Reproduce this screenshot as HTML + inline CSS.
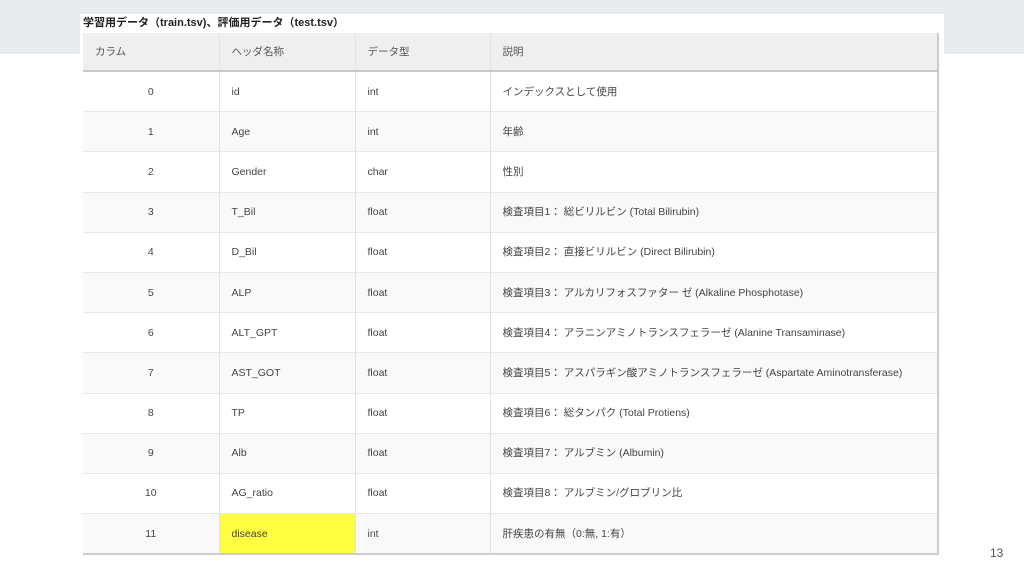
<!DOCTYPE html>
<html><head><meta charset="utf-8"><style>
body{margin:0;width:1024px;height:576px;background:#fff;position:relative;overflow:hidden;font-family:"Liberation Sans","Noto Sans CJK JP",sans-serif;}
.band{position:absolute;left:0;top:0;width:1024px;height:54px;background:#e8ebed;}
.img{position:absolute;left:80px;top:14px;width:864px;height:546px;background:#fff;}
.title{position:absolute;left:83px;top:16px;font-size:11px;line-height:14px;font-weight:bold;color:#222;}
table{position:absolute;left:83px;top:33px;width:856px;border-collapse:collapse;font-size:10.5px;line-height:14px;color:#444;table-layout:fixed;border-right:2px solid #ccc;border-bottom:2px solid #ccc;}
td,th{border-left:1px solid #e2e2e2;padding:0 0 0 12px;text-align:left;font-weight:normal;vertical-align:middle;white-space:nowrap;}
th{height:37px;background:#efefef;border-bottom:2px solid #c8c8c8;color:#555;}
td{height:39.2px;border-top:1px solid #e8e8e8;}
td span{display:inline-block;height:14px;line-height:14px;vertical-align:middle;}
td:first-child,th:first-child{border-left:none;}
td:first-child{text-align:center;padding:0;}
tr:nth-child(odd) td{background:#f9f9f9;}
.y{background:#ffff40 !important;}
.pg{position:absolute;left:990px;top:546px;font-size:12px;color:#555;}
</style></head><body>
<div class="band"></div>
<div class="img"></div>
<div class="title">学習用データ（train.tsv)、評価用データ（test.tsv）</div>
<table>
<colgroup><col style="width:136px"><col style="width:136px"><col style="width:135px"><col></colgroup>
<tr><th>カラム</th><th>ヘッダ名称</th><th>データ型</th><th>説明</th></tr>
<tr><td>0</td><td>id</td><td>int</td><td>インデックスとして使用</td></tr>
<tr><td>1</td><td>Age</td><td>int</td><td>年齢</td></tr>
<tr><td>2</td><td>Gender</td><td>char</td><td>性別</td></tr>
<tr><td>3</td><td>T_Bil</td><td>float</td><td>検査項目1： 総ビリルビン (Total Bilirubin)</td></tr>
<tr><td>4</td><td>D_Bil</td><td>float</td><td>検査項目2： 直接ビリルビン (Direct Bilirubin)</td></tr>
<tr><td>5</td><td>ALP</td><td>float</td><td>検査項目3： アルカリフォスファター ゼ (Alkaline Phosphotase)</td></tr>
<tr><td>6</td><td>ALT_GPT</td><td>float</td><td>検査項目4： アラニンアミノトランスフェラーゼ (Alanine Transaminase)</td></tr>
<tr><td>7</td><td>AST_GOT</td><td>float</td><td>検査項目5： アスパラギン酸アミノトランスフェラーゼ (Aspartate Aminotransferase)</td></tr>
<tr><td>8</td><td>TP</td><td>float</td><td>検査項目6： 総タンパク (Total Protiens)</td></tr>
<tr><td>9</td><td>Alb</td><td>float</td><td>検査項目7： アルブミン (Albumin)</td></tr>
<tr><td>10</td><td>AG_ratio</td><td>float</td><td>検査項目8： アルブミン/グロブリン比</td></tr>
<tr><td>11</td><td class="y">disease</td><td>int</td><td>肝疾患の有無（0:無, 1:有）</td></tr>
</table>
<div class="pg">13</div>
</body></html>
